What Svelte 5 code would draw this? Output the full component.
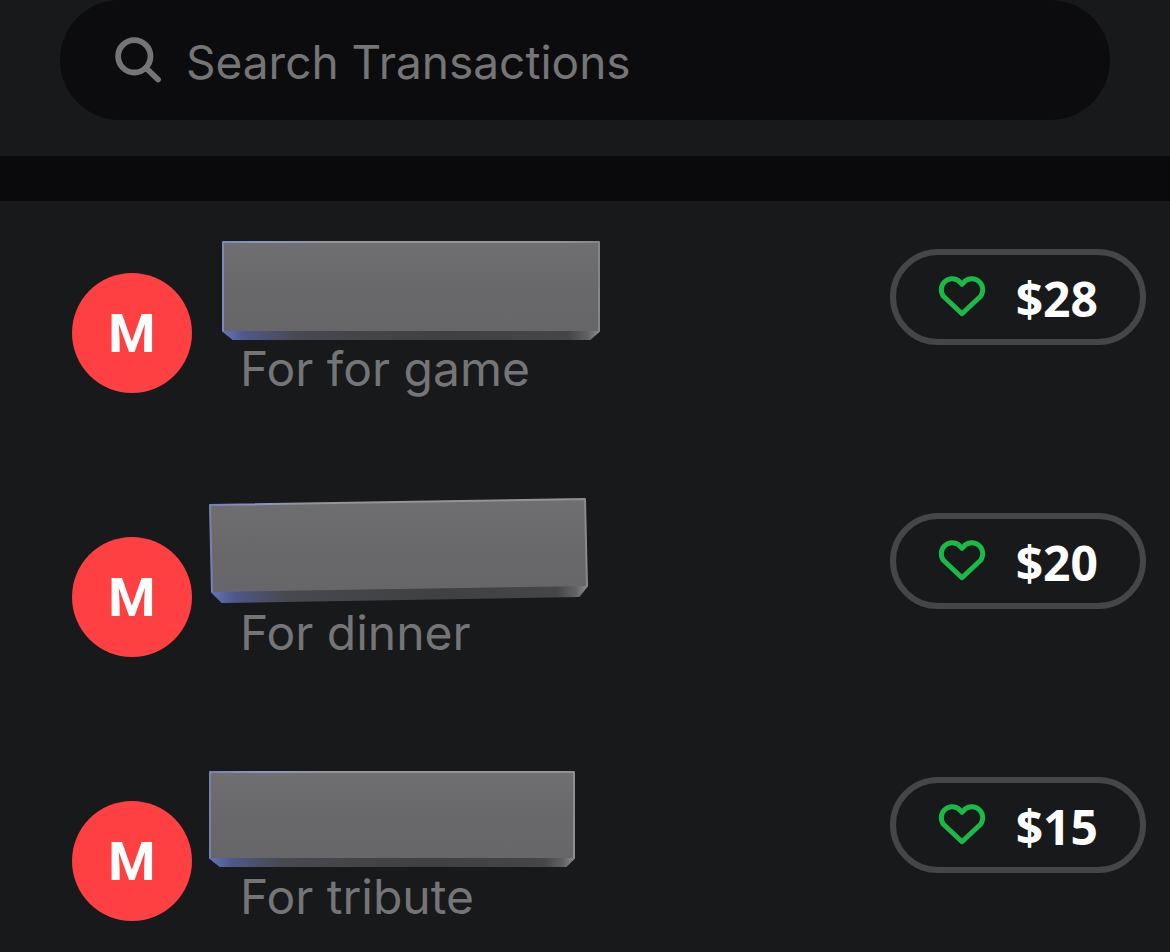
<script>
	let query = $state('');

	// corners of each name plate: top left, top right, right edge, bevel right, bevel left, left edge
	const transactions = [
		{
			note: 'For for game',
			amount: '$28',
			plate: [[15, 11], [391, 11], [391, 100], [382, 108], [25, 108], [15, 100]]
		},
		{
			note: 'For dinner',
			amount: '$20',
			plate: [[2, 10], [377, 4], [379, 91], [371, 101], [14, 107], [4, 97]]
		},
		{
			note: 'For tribute',
			amount: '$15',
			plate: [[2, 13], [366, 13], [366, 99], [358, 107], [12, 107], [2, 99]]
		}
	];

	const points = (list) => list.map((p) => p.join(',')).join(' ');
</script>

<svg class="defs" width="0" height="0" aria-hidden="true">
	<defs>
		<linearGradient id="face" x1="0" y1="0" x2="0" y2="1">
			<stop offset="0" stop-color="#6f6f71" />
			<stop offset="0.5" stop-color="#69696b" />
			<stop offset="1" stop-color="#666668" />
		</linearGradient>
		<linearGradient id="bevel">
			<stop offset="0" stop-color="#6474b4" />
			<stop offset="0.06" stop-color="#4d5888" />
			<stop offset="0.2" stop-color="#48494f" />
			<stop offset="0.6" stop-color="#404042" />
			<stop offset="0.92" stop-color="#464648" />
			<stop offset="0.97" stop-color="#626264" />
			<stop offset="1" stop-color="#8a8a8c" />
		</linearGradient>
		<linearGradient id="rim" gradientUnits="userSpaceOnUse" x1="0" y1="0" x2="392" y2="0">
			<stop offset="0" stop-color="#7480b4" />
			<stop offset="0.12" stop-color="#8b95c4" />
			<stop offset="0.3" stop-color="#949496" />
			<stop offset="0.9" stop-color="#949496" />
			<stop offset="1" stop-color="#858587" />
		</linearGradient>
	</defs>
</svg>

<main>
	<header>
		<label class="search">
			<svg width="48" height="48" viewBox="0 0 48 48" aria-hidden="true">
				<circle cx="20.3" cy="20.3" r="16.2" />
				<path d="M32.5 32.5 L44 43.5" />
			</svg>
			<input type="text" placeholder="Search Transactions" aria-label="Search Transactions" bind:value={query} />
		</label>
	</header>

	<ul>
		{#each transactions as { note, amount, plate }}
			<li>
				<div class="avatar">M</div>
				<div class="details">
					<svg class="plate" width="394" height="110" viewBox="0 0 394 110" aria-hidden="true">
						<polygon points={points(plate.slice(2))} class="bevel" />
						<polygon points={points([plate[0], plate[1], plate[2], plate[5]])} class="face" />
						<polyline points={points([plate[5], plate[0], plate[1], plate[2]])} class="rim" />
					</svg>
					<p>{note}</p>
				</div>
				<button type="button">
					<svg width="48" height="44" viewBox="0 0 48 44" aria-hidden="true">
						<path
							d="M24 9.4 L20.6 5.7 A11 11 0 0 0 5.4 21.2 L24 38.8 L42.6 21.2 A11 11 0 0 0 27.4 5.7 Z"
						/>
					</svg>
					<span>{amount}</span>
				</button>
			</li>
		{/each}
	</ul>
</main>

<style>
	:global(body) {
		background: #18191b;
	}

	.defs {
		position: absolute;
	}

	main {
		font-family: Inter, sans-serif;
		color: #fff;
	}

	header {
		padding: 0 60px 36px;
		border-bottom: 45px solid #0a0a0c;
	}

	.search {
		display: flex;
		align-items: center;
		gap: 24px;
		height: 120px;
		padding: 0 54px;
		box-sizing: border-box;
		border-radius: 60px;
		background: #0c0c0e;
	}

	.search svg {
		flex: none;
		fill: none;
		stroke: #757577;
		stroke-width: 5.8;
		stroke-linecap: round;
	}

	input {
		flex: 1;
		min-width: 0;
		padding: 4px 0 0;
		border: 0;
		outline: 0;
		background: none;
		color: #fff;
		font: 400 46px/56px Inter, sans-serif;
	}

	input::placeholder {
		color: #757577;
		opacity: 1;
	}

	ul {
		display: flex;
		flex-direction: column;
		gap: 68px;
		margin: 0;
		padding: 0;
		list-style: none;
	}

	li {
		display: flex;
		align-items: flex-start;
		gap: 16px;
		padding: 0 24px 0 72px;
	}

	.avatar {
		flex: none;
		width: 120px;
		margin-top: 72px;
		padding-top: 2px;
		border-radius: 50%;
		background: #ff4042;
		font: 700 54px/118px Roboto, sans-serif;
		text-align: center;
	}

	.details {
		flex: 1;
		min-width: 0;
		padding-top: 30px;
	}

	.plate {
		display: block;
	}

	.bevel {
		fill: url(#bevel);
		stroke: url(#bevel);
		stroke-width: 2;
		stroke-linejoin: round;
	}

	.face {
		fill: url(#face);
	}

	.rim {
		fill: none;
		stroke: url(#rim);
		stroke-width: 2;
		stroke-linejoin: round;
	}

	p {
		margin: 0;
		padding-left: 32px;
		color: #757577;
		font-size: 48px;
		line-height: 56px;
	}

	button {
		display: flex;
		align-items: center;
		gap: 30px;
		height: 96px;
		margin-top: 48px;
		padding: 0 42px;
		border: 6px solid #464648;
		border-radius: 48px;
		background: none;
		color: #fff;
		font: 700 48px/56px 'Open Sans', sans-serif;
		cursor: pointer;
	}

	button span {
		padding-top: 4px;
	}

	button svg {
		fill: none;
		stroke: #1bb946;
		stroke-width: 5;
		stroke-linejoin: round;
	}
</style>
